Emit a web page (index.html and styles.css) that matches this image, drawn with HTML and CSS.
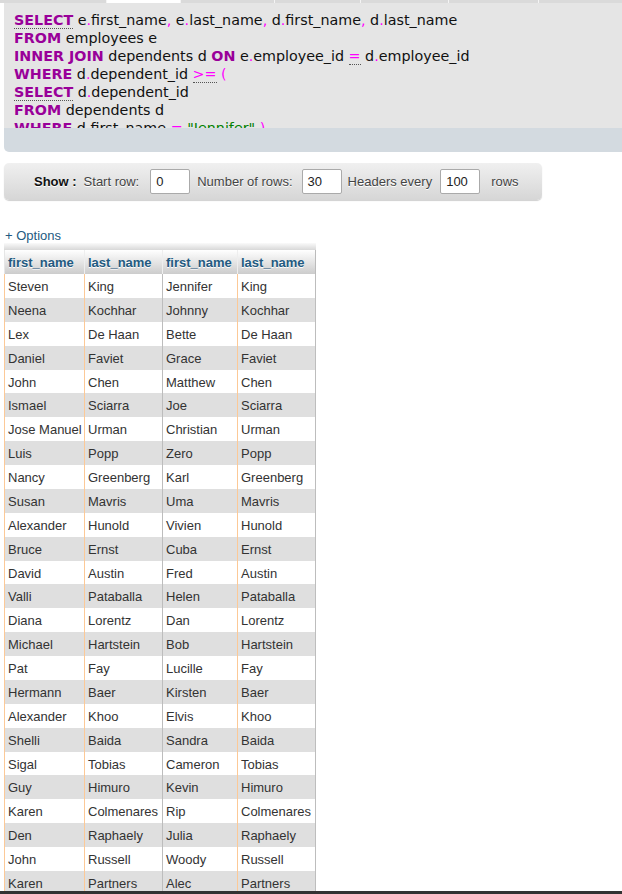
FILE: index.html
```html
<!DOCTYPE html>
<html>
<head>
<meta charset="utf-8">
<link rel="stylesheet" href="styles.css">
</head>
<body>
<div class="tabs">
  <div class="tab t1"></div>
  <div class="tab t2 active"></div>
  <div class="tab t3"></div>
  <div class="tab t4"></div>
  <div class="tab t5"></div>
  <div class="tab t6"></div>
  <div class="tab t7"></div>
</div>

<div class="sqlbox">
  <div class="sql">
    <div class="ln"><span class="kw doc">SELECT</span> e<span class="op">.</span>first_name<span class="op">,</span> e<span class="op">.</span>last_name<span class="op">,</span> d<span class="op">.</span>first_name<span class="op">,</span> d<span class="op">.</span>last_name</div>
    <div class="ln"><span class="kw">FROM</span> employees e</div>
    <div class="ln"><span class="kw">INNER JOIN</span> dependents d <span class="kw">ON</span> e<span class="op">.</span>employee_id <span class="op doc">=</span> d<span class="op">.</span>employee_id</div>
    <div class="ln"><span class="kw">WHERE</span> d<span class="op">.</span>dependent_id <span class="op doc">&gt;=</span> <span class="op">(</span></div>
    <div class="ln"><span class="kw doc">SELECT</span> d<span class="op">.</span>dependent_id</div>
    <div class="ln"><span class="kw">FROM</span> dependents d</div>
    <div class="ln"><span class="kw">WHERE</span> d<span class="op">.</span>first_name <span class="op doc">=</span> <span class="str">"Jennifer"</span> <span class="op">)</span></div>
  </div>
  <div class="sqlfoot"></div>
</div>

<div class="showbar">
  <span class="show-label">Show :</span>
  <span class="lbl l1">Start row:</span>
  <span class="inp i1">0</span>
  <span class="lbl l2">Number of rows:</span>
  <span class="inp i2">30</span>
  <span class="lbl l3">Headers every</span>
  <span class="inp i3">100</span>
  <span class="lbl l4">rows</span>
</div>

<div class="options">+ Options</div>

<div class="tablewrap">
<table class="data">
  <colgroup>
    <col class="c1"><col class="c2"><col class="c3"><col class="c4">
  </colgroup>
  <thead>
    <tr><th>first_name</th><th>last_name</th><th>first_name</th><th>last_name</th></tr>
  </thead>
  <tbody>
    <tr class="odd"><td>Steven</td><td>King</td><td>Jennifer</td><td>King</td></tr>
    <tr class="even"><td>Neena</td><td>Kochhar</td><td>Johnny</td><td>Kochhar</td></tr>
    <tr class="odd"><td>Lex</td><td>De Haan</td><td>Bette</td><td>De Haan</td></tr>
    <tr class="even"><td>Daniel</td><td>Faviet</td><td>Grace</td><td>Faviet</td></tr>
    <tr class="odd"><td>John</td><td>Chen</td><td>Matthew</td><td>Chen</td></tr>
    <tr class="even"><td>Ismael</td><td>Sciarra</td><td>Joe</td><td>Sciarra</td></tr>
    <tr class="odd"><td>Jose Manuel</td><td>Urman</td><td>Christian</td><td>Urman</td></tr>
    <tr class="even"><td>Luis</td><td>Popp</td><td>Zero</td><td>Popp</td></tr>
    <tr class="odd"><td>Nancy</td><td>Greenberg</td><td>Karl</td><td>Greenberg</td></tr>
    <tr class="even"><td>Susan</td><td>Mavris</td><td>Uma</td><td>Mavris</td></tr>
    <tr class="odd"><td>Alexander</td><td>Hunold</td><td>Vivien</td><td>Hunold</td></tr>
    <tr class="even"><td>Bruce</td><td>Ernst</td><td>Cuba</td><td>Ernst</td></tr>
    <tr class="odd"><td>David</td><td>Austin</td><td>Fred</td><td>Austin</td></tr>
    <tr class="even"><td>Valli</td><td>Pataballa</td><td>Helen</td><td>Pataballa</td></tr>
    <tr class="odd"><td>Diana</td><td>Lorentz</td><td>Dan</td><td>Lorentz</td></tr>
    <tr class="even"><td>Michael</td><td>Hartstein</td><td>Bob</td><td>Hartstein</td></tr>
    <tr class="odd"><td>Pat</td><td>Fay</td><td>Lucille</td><td>Fay</td></tr>
    <tr class="even"><td>Hermann</td><td>Baer</td><td>Kirsten</td><td>Baer</td></tr>
    <tr class="odd"><td>Alexander</td><td>Khoo</td><td>Elvis</td><td>Khoo</td></tr>
    <tr class="even"><td>Shelli</td><td>Baida</td><td>Sandra</td><td>Baida</td></tr>
    <tr class="odd"><td>Sigal</td><td>Tobias</td><td>Cameron</td><td>Tobias</td></tr>
    <tr class="even"><td>Guy</td><td>Himuro</td><td>Kevin</td><td>Himuro</td></tr>
    <tr class="odd"><td>Karen</td><td>Colmenares</td><td>Rip</td><td>Colmenares</td></tr>
    <tr class="even"><td>Den</td><td>Raphaely</td><td>Julia</td><td>Raphaely</td></tr>
    <tr class="odd"><td>John</td><td>Russell</td><td>Woody</td><td>Russell</td></tr>
    <tr class="even"><td>Karen</td><td>Partners</td><td>Alec</td><td>Partners</td></tr>
  </tbody>
</table>
</div>

<div class="console-bar"></div>
</body>
</html>
```

FILE: styles.css
```css
html, body {
  margin: 0;
  padding: 0;
  background: #fff;
}
body {
  font-family: "Liberation Sans", Arial, sans-serif;
  font-size: 13px;
  color: #333;
}

/* top tab strip */
.tabs {
  display: flex;
  height: 3px;
  background: #dadada;
}
.tab {
  height: 3px;
  background: #dadada;
  border-right: 1px solid #f4f4f4;
}
.tab.active { background: #fff; }
.t1 { width: 106px; }
.t2 { width: 73px; }
.t3 { width: 93px; }
.t4 { width: 85px; }
.t5 { width: 87px; }
.t6 { width: 89px; }
.t7 { flex: 1; border-right: none; }

/* SQL box */
.sqlbox {
  margin-left: 4px;
  border-bottom-left-radius: 5px;
  overflow: hidden;
}
.sql {
  height: 125px;
  overflow: hidden;
  box-sizing: border-box;
  padding: 8px 0 0 10px;
  background: #e5e5e5;
  font-family: "DejaVu Sans", Verdana, sans-serif;
  font-size: 14.3px;
  line-height: 18px;
  color: #111;
  white-space: nowrap;
}
.kw {
  color: #990099;
  font-weight: bold;
}
.op { color: #ff00ff; }
.str { color: #008000; }
.doc {
  border-bottom: 1px dotted #555;
}
.sqlfoot {
  height: 24px;
  background: #d3dae0;
}

/* show bar */
.showbar {
  margin: 11px 0 0 4px;
  width: 538px;
  height: 37px;
  box-sizing: border-box;
  padding-left: 30px;
  display: flex;
  align-items: center;
  border-radius: 5px;
  background: linear-gradient(#f0f0f0, #d6d6d6);
  box-shadow: 0 1px 1px #d0d0d0;
  color: #444;
}
.show-label {
  font-weight: bold;
  color: #111;
  text-shadow: 0 1px 0 #fff;
  margin-right: 7px;
}
.lbl { text-shadow: 0 1px 0 #fff; }
.l1 { margin-right: 11px; }
.l2 { margin-right: 9px; }
.l3 { margin-right: 8px; }
.inp {
  width: 40px;
  height: 25px;
  box-sizing: border-box;
  background: #fff;
  border: 1px solid #aaa;
  border-radius: 2px;
  padding-left: 5px;
  line-height: 23px;
  color: #222;
}
.i1 { margin-right: 7px; }
.i2 { margin-right: 6px; }
.i3 { margin-right: 11px; }

/* options link */
.options {
  margin: 28px 0 0 5px;
  height: 15px;
  line-height: 15px;
  color: #235a81;
}

/* results table */
.tablewrap {
  display: inline-block;
  margin-left: 4px;
  padding-top: 7px;
  background: linear-gradient(#fafafa, #d8d8d8) no-repeat top / 100% 7px;
}
table.data {
  border-collapse: separate;
  border-spacing: 0;
  table-layout: fixed;
  width: 312px;
}
col.c1 { width: 80px; }
col.c2 { width: 78px; }
col.c3 { width: 75px; }
col.c4 { width: 79px; }
table.data th {
  height: 24px;
  box-sizing: border-box;
  padding: 1px 3px 0;
  text-align: left;
  font-weight: bold;
  color: #235a81;
  text-shadow: 0 1px 0 #fff;
  background: linear-gradient(#ffffff, #cccccc);
  border-left: 1px solid #eeeeee;
  white-space: nowrap;
}
table.data th:first-child { border-left: 1px solid #e6e6e6; }
table.data th:last-child { border-right: 1px solid #bbb; }
table.data td {
  padding: 5px 3px 3px;
  line-height: 15.875px;
  white-space: nowrap;
  color: #333;
  border-left: 1px solid #fcc997;
}
table.data td:nth-child(3) { border-left-color: #bdbdbd; }
table.data td:last-child { border-right: 1px solid #bdbdbd; }
tr.odd td { background: #fff; }
tr.even td { background: #dfdfdf; }

/* console bar overlaid at the bottom edge */
.console-bar {
  position: fixed;
  left: 0;
  right: 0;
  bottom: 0;
  height: 3px;
  background: #333;
}
```
